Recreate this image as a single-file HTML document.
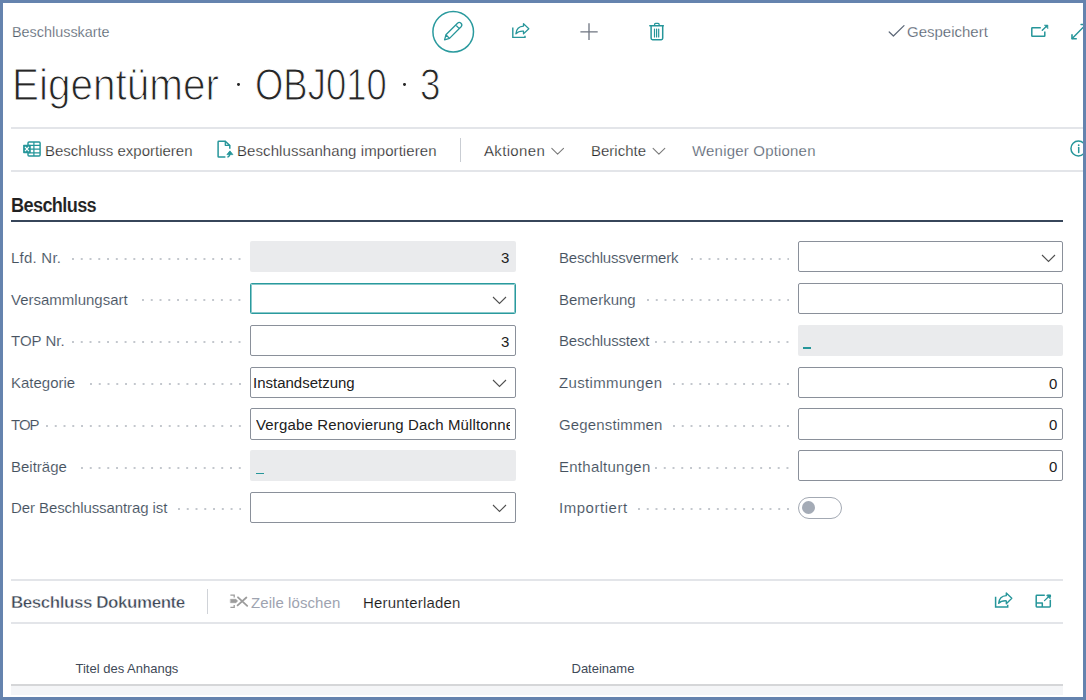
<!DOCTYPE html>
<html><head><meta charset="utf-8">
<style>
html,body{margin:0;padding:0;}
body{width:1086px;height:700px;position:relative;overflow:hidden;background:#fff;font-family:"Liberation Sans",sans-serif;}
.t{position:absolute;white-space:nowrap;line-height:1;-webkit-text-stroke:0.25px #fff;}
.ln{position:absolute;height:2px;background:#e3e5e9;}
.dots{position:absolute;height:2px;background-image:radial-gradient(circle at 1px 1px,#c3c7cd 0.85px,rgba(255,255,255,0) 1.25px);background-size:8.78px 2px;background-repeat:repeat-x;}
.box{position:absolute;box-sizing:border-box;border:1px solid #8a909a;background:#fff;border-radius:2px;}
.box.ro{border:none;background:#eaebed;}
.box.focus{border:1px solid #2a9a9e;box-shadow:inset 0 0 0 1px rgba(42,154,158,0.55);border-radius:1.5px;}
.chev{position:absolute;}
svg{position:absolute;overflow:visible;}
#frame{position:absolute;left:0;top:0;width:1080px;height:694px;border:3px solid #6583ae;z-index:10;}
</style></head>
<body>
<div class="t" style="left:12.00px;top:24.96px;font-size:14.4px;color:#4d5868;">Beschlusskarte</div>
<div class="t" style="left:11.71px;top:61.95px;font-size:45px;color:#262626;-webkit-text-stroke:1.1px #fff;transform:scaleX(0.899);transform-origin:0 0;">Eigentümer</div>
<div class="t" style="left:255.26px;top:61.95px;font-size:45px;color:#262626;-webkit-text-stroke:1.1px #fff;transform:scaleX(0.81);transform-origin:0 0;">OBJ010</div>
<div class="t" style="left:420.45px;top:61.95px;font-size:45px;color:#262626;-webkit-text-stroke:1.1px #fff;transform:scaleX(0.817);transform-origin:0 0;">3</div>
<div style="position:absolute;left:236.9px;top:83.1px;width:2.8px;height:2.8px;border-radius:50%;background:#262626"></div>
<div style="position:absolute;left:402.9px;top:83.1px;width:2.8px;height:2.8px;border-radius:50%;background:#262626"></div>
<div class="t" style="left:907.00px;top:24.11px;font-size:15.4px;color:#4d5868;transform:scaleX(0.974);transform-origin:0 0;">Gespeichert</div>
<div class="ln" style="left:11px;top:127px;width:1072px;"></div>
<div class="ln" style="left:11px;top:170px;width:1072px;"></div>
<div style="position:absolute;left:459.8px;top:137.7px;width:1px;height:24.5px;background:#c9cdd3"></div>
<div class="t" style="left:45.00px;top:143.11px;font-size:15.4px;color:#262626;transform:scaleX(0.974);transform-origin:0 0;">Beschluss exportieren</div>
<div class="t" style="left:237.30px;top:143.11px;font-size:15.4px;color:#262626;letter-spacing:0.08px;transform:scaleX(0.974);transform-origin:0 0;">Beschlussanhang importieren</div>
<div class="t" style="left:483.50px;top:143.11px;font-size:15.4px;color:#262626;letter-spacing:0.35px;transform:scaleX(0.974);transform-origin:0 0;">Aktionen</div>
<div class="t" style="left:590.50px;top:143.11px;font-size:15.4px;color:#262626;transform:scaleX(0.974);transform-origin:0 0;">Berichte</div>
<div class="t" style="left:691.50px;top:143.11px;font-size:15.4px;color:#4d5868;letter-spacing:0.2px;transform:scaleX(0.974);transform-origin:0 0;">Weniger Optionen</div>
<div class="t" style="left:11.00px;top:195.62px;font-size:19.5px;color:#212121;font-weight:700;letter-spacing:-0.7px;-webkit-text-stroke:0.1px #fff;transform:scaleX(0.932);transform-origin:0 0;">Beschluss</div>
<div style="position:absolute;left:11px;top:219.5px;width:1052px;height:2px;background:#37465a"></div>
<div class="t" style="left:11.00px;top:249.81px;font-size:15.4px;color:#46525f;letter-spacing:0.24px;-webkit-text-stroke:0.12px #fff;transform:scaleX(0.974);transform-origin:0 0;">Lfd. Nr.</div>
<div class="t" style="left:558.80px;top:249.81px;font-size:15.4px;color:#46525f;letter-spacing:-0.2px;-webkit-text-stroke:0.12px #fff;transform:scaleX(0.974);transform-origin:0 0;">Beschlussvermerk</div>
<div class="dots" style="left:72.20px;top:257.60px;width:168.82px"></div>
<div class="dots" style="left:690.60px;top:257.60px;width:98.58px"></div>
<div class="t" style="left:11.00px;top:291.61px;font-size:15.4px;color:#46525f;-webkit-text-stroke:0.12px #fff;transform:scaleX(0.974);transform-origin:0 0;">Versammlungsart</div>
<div class="t" style="left:558.80px;top:291.61px;font-size:15.4px;color:#46525f;-webkit-text-stroke:0.12px #fff;transform:scaleX(0.974);transform-origin:0 0;">Bemerkung</div>
<div class="dots" style="left:142.30px;top:299.40px;width:98.58px"></div>
<div class="dots" style="left:646.60px;top:299.40px;width:142.48px"></div>
<div class="t" style="left:11.00px;top:333.41px;font-size:15.4px;color:#46525f;-webkit-text-stroke:0.12px #fff;transform:scaleX(0.974);transform-origin:0 0;">TOP Nr.</div>
<div class="t" style="left:558.80px;top:333.41px;font-size:15.4px;color:#46525f;letter-spacing:-0.17px;-webkit-text-stroke:0.12px #fff;transform:scaleX(0.974);transform-origin:0 0;">Beschlusstext</div>
<div class="dots" style="left:72.20px;top:341.20px;width:168.82px"></div>
<div class="dots" style="left:655.30px;top:341.20px;width:133.70px"></div>
<div class="t" style="left:11.00px;top:375.21px;font-size:15.4px;color:#46525f;-webkit-text-stroke:0.12px #fff;transform:scaleX(0.974);transform-origin:0 0;">Kategorie</div>
<div class="t" style="left:558.80px;top:375.21px;font-size:15.4px;color:#46525f;letter-spacing:0.36px;-webkit-text-stroke:0.12px #fff;transform:scaleX(0.974);transform-origin:0 0;">Zustimmungen</div>
<div class="dots" style="left:89.80px;top:383.00px;width:151.26px"></div>
<div class="dots" style="left:672.90px;top:383.00px;width:116.14px"></div>
<div class="t" style="left:11.00px;top:416.91px;font-size:15.4px;color:#46525f;letter-spacing:-1.0px;-webkit-text-stroke:0.12px #fff;transform:scaleX(0.974);transform-origin:0 0;">TOP</div>
<div class="t" style="left:558.80px;top:416.91px;font-size:15.4px;color:#46525f;letter-spacing:0.16px;-webkit-text-stroke:0.12px #fff;transform:scaleX(0.974);transform-origin:0 0;">Gegenstimmen</div>
<div class="dots" style="left:45.90px;top:424.70px;width:195.16px"></div>
<div class="dots" style="left:672.90px;top:424.70px;width:116.14px"></div>
<div class="t" style="left:11.00px;top:458.71px;font-size:15.4px;color:#46525f;-webkit-text-stroke:0.12px #fff;transform:scaleX(0.974);transform-origin:0 0;">Beiträge</div>
<div class="t" style="left:558.80px;top:458.71px;font-size:15.4px;color:#46525f;letter-spacing:0.27px;-webkit-text-stroke:0.12px #fff;transform:scaleX(0.974);transform-origin:0 0;">Enthaltungen</div>
<div class="dots" style="left:81.00px;top:466.50px;width:160.04px"></div>
<div class="dots" style="left:655.30px;top:466.50px;width:133.70px"></div>
<div class="t" style="left:11.00px;top:500.41px;font-size:15.4px;color:#46525f;letter-spacing:-0.09px;-webkit-text-stroke:0.12px #fff;transform:scaleX(0.974);transform-origin:0 0;">Der Beschlussantrag ist</div>
<div class="t" style="left:558.80px;top:500.41px;font-size:15.4px;color:#46525f;letter-spacing:0.55px;-webkit-text-stroke:0.12px #fff;transform:scaleX(0.974);transform-origin:0 0;">Importiert</div>
<div class="dots" style="left:177.50px;top:508.20px;width:63.46px"></div>
<div class="dots" style="left:637.80px;top:508.20px;width:151.26px"></div>
<div class="box ro" style="left:250px;top:241.3px;width:265.5px;height:31.2px"></div>
<div class="t" style="left:501.00px;top:250.21px;font-size:15.4px;color:#212121;-webkit-text-stroke:0;transform:scaleX(0.974);transform-origin:0 0;">3</div>
<div class="box focus" style="left:250px;top:283.1px;width:265.5px;height:31.2px"></div>
<svg class="chev" style="left:492px;top:295.6px" width="15" height="9" viewBox="0 0 15 9"><path d="M1 1 L7.5 7.5 L14 1" fill="none" stroke="#505050" stroke-width="1.1"/></svg>
<div class="box " style="left:250px;top:324.9px;width:265.5px;height:31.2px"></div>
<div class="t" style="left:501.00px;top:333.81px;font-size:15.4px;color:#212121;-webkit-text-stroke:0;transform:scaleX(0.974);transform-origin:0 0;">3</div>
<div class="box " style="left:250px;top:366.7px;width:265.5px;height:31.2px"></div>
<div class="t" style="left:253.30px;top:375.31px;font-size:15.4px;color:#212121;-webkit-text-stroke:0;transform:scaleX(0.974);transform-origin:0 0;">Instandsetzung</div>
<svg class="chev" style="left:492px;top:379.2px" width="15" height="9" viewBox="0 0 15 9"><path d="M1 1 L7.5 7.5 L14 1" fill="none" stroke="#505050" stroke-width="1.1"/></svg>
<div class="box " style="left:250px;top:408.4px;width:265.5px;height:31.2px"></div>
<div style="position:absolute;left:255px;top:409.4px;width:254.5px;height:29.2px;overflow:hidden">
<div class="t" style="left:0.50px;top:7.91px;font-size:15.4px;color:#212121;letter-spacing:0.15px;-webkit-text-stroke:0;transform:scaleX(0.974);transform-origin:0 0;">Vergabe Renovierung Dach Mülltonne</div>
</div>
<div class="box ro" style="left:250px;top:450.2px;width:265.5px;height:31.2px"></div>
<div style="position:absolute;left:255.5px;top:472.7px;width:8px;height:1.3px;background:#26969a"></div>
<div class="box " style="left:250px;top:491.9px;width:265.5px;height:31.2px"></div>
<svg class="chev" style="left:492px;top:504.4px" width="15" height="9" viewBox="0 0 15 9"><path d="M1 1 L7.5 7.5 L14 1" fill="none" stroke="#505050" stroke-width="1.1"/></svg>
<div class="box " style="left:797.5px;top:241.3px;width:265.5px;height:31.2px"></div>
<svg class="chev" style="left:1041.0px;top:253.8px" width="15" height="9" viewBox="0 0 15 9"><path d="M1 1 L7.5 7.5 L14 1" fill="none" stroke="#505050" stroke-width="1.1"/></svg>
<div class="box " style="left:797.5px;top:283.1px;width:265.5px;height:31.2px"></div>
<div class="box ro" style="left:797.5px;top:324.9px;width:265.5px;height:31.2px"></div>
<div style="position:absolute;left:803.0px;top:347.4px;width:8px;height:1.3px;background:#26969a"></div>
<div class="box " style="left:797.5px;top:366.7px;width:265.5px;height:31.2px"></div>
<div class="t" style="left:1048.50px;top:375.61px;font-size:15.4px;color:#212121;-webkit-text-stroke:0;transform:scaleX(0.974);transform-origin:0 0;">0</div>
<div class="box " style="left:797.5px;top:408.4px;width:265.5px;height:31.2px"></div>
<div class="t" style="left:1048.50px;top:417.31px;font-size:15.4px;color:#212121;-webkit-text-stroke:0;transform:scaleX(0.974);transform-origin:0 0;">0</div>
<div class="box " style="left:797.5px;top:450.2px;width:265.5px;height:31.2px"></div>
<div class="t" style="left:1048.50px;top:459.11px;font-size:15.4px;color:#212121;-webkit-text-stroke:0;transform:scaleX(0.974);transform-origin:0 0;">0</div>
<div style="position:absolute;left:797.5px;top:497.3px;width:44px;height:21.5px;box-sizing:border-box;border:1px solid #a3a9b3;border-radius:11px;background:#fff"></div>
<div style="position:absolute;left:801.8px;top:501.3px;width:13px;height:13px;border-radius:50%;background:#a4abb6"></div>
<div class="ln" style="left:11px;top:579px;width:1052px;"></div>
<div class="ln" style="left:11px;top:622px;width:1052px;"></div>
<div class="t" style="left:11.00px;top:593.55px;font-size:17px;color:#3d4756;font-weight:700;letter-spacing:-0.45px;-webkit-text-stroke:0.45px #fff;">Beschluss Dokumente</div>
<div style="position:absolute;left:207px;top:589px;width:1px;height:25px;background:#d0d3d8"></div>
<div class="t" style="left:251.20px;top:594.61px;font-size:15.4px;color:#9ea3b0;letter-spacing:0.08px;-webkit-text-stroke:0;transform:scaleX(0.974);transform-origin:0 0;">Zeile löschen</div>
<div class="t" style="left:363.30px;top:594.61px;font-size:15.4px;color:#1e1e1e;letter-spacing:0.2px;-webkit-text-stroke:0.1px #fff;transform:scaleX(0.974);transform-origin:0 0;">Herunterladen</div>
<div class="t" style="left:75.50px;top:661.55px;font-size:13px;color:#3f4a58;-webkit-text-stroke:0;">Titel des Anhangs</div>
<div class="t" style="left:571.50px;top:661.55px;font-size:13px;color:#3f4a58;-webkit-text-stroke:0;">Dateiname</div>
<div style="position:absolute;left:11px;top:684px;width:1052px;height:2px;background:#d5d6d8"></div>
<div style="position:absolute;left:11px;top:686px;width:1052px;height:9px;background:#f4f5f7"></div>
<svg style="left:0;top:0" width="1086" height="700" viewBox="0 0 1086 700">
<g fill="none" stroke="#26969a" stroke-linejoin="round" stroke-linecap="round">
  <!-- edit circle + pencil -->
  <circle cx="453.2" cy="31.8" r="20.3" stroke="#2a9a9e" stroke-width="1.5"/>
  <path d="M444.6 39.8 L445.9 34.8 L457.5 23.2 A2.55 2.55 0 0 1 461.1 26.8 L449.5 38.4 Z M445.9 34.8 L449.5 38.4 M455.7 25 L459.3 28.6" stroke-width="1.3"/>
  <!-- share top -->
  <path d="M512.8 27.6 V37.4 H525 V35.8" stroke-width="1.4" stroke-linecap="butt" stroke-linejoin="miter"/>
  <path d="M515.9 33.8 C516.3 29.3 519.3 26.3 523.5 26.1 V23.6 L528.8 28.8 L523.5 33.9 V31.2 C520.3 31 517.6 32 515.9 33.8 Z" stroke-width="1.3"/>
  <!-- trash -->
  <path d="M649.8 25.7 H663.3" stroke-width="1.45"/>
  <path d="M654.6 25.4 V24.2 Q654.6 23.3 655.5 23.3 H658.2 Q659.1 23.3 659.1 24.2 V25.4" stroke-width="1.3"/>
  <path d="M651.1 25.7 V38.3 Q651.1 39.7 652.5 39.7 H661.3 Q662.7 39.7 662.7 38.3 V25.7" stroke-width="1.5"/>
  <path d="M654.5 29 V37 M656.6 29 V37 M658.7 29 V37" stroke-width="1.2"/>
  <!-- open in new window -->
  <path d="M1040.8 27.8 H1032.3 Q1031.8 27.8 1031.8 28.3 V35.8 Q1031.8 36.3 1032.3 36.3 H1044.3 Q1044.8 36.3 1044.8 35.8 V31.6" stroke-width="1.5" stroke-linecap="butt"/>
  <path d="M1042.3 30.3 L1046.5 26.3" stroke-width="1.4"/>
  <path d="M1044.6 25.1 H1047.9 V28.4 Z" fill="#26969a" stroke-width="0.6"/>
  <!-- expand (clipped) -->
  <path d="M1072.2 38.6 L1083 27.6" stroke-width="1.4"/>
  <path d="M1072 34.2 V38.8 H1076.8" stroke-width="1.6" stroke-linecap="butt"/>
  <path d="M1081 24.5 H1083.5" stroke-width="1.4"/>
  <!-- info -->
  <circle cx="1078.4" cy="148.5" r="7.45" stroke-width="1.5"/>
  <path d="M1078.7 147.6 V152.4" stroke-width="1.5"/>
  <circle cx="1078.7" cy="145.2" r="0.9" fill="#26969a" stroke="none"/>
  <!-- document import -->
  <path d="M225.4 157.1 H218.8 Q218.1 157.1 218.1 156.4 V141.9 Q218.1 141.2 218.8 141.2 H225.3 L229.8 145.6 V148.7" stroke-width="1.5" stroke-linecap="butt"/>
  <path d="M225.3 141.4 V145.3 H229.6" stroke-width="1.3"/>
  <path d="M227.4 157.1 Q229.9 156.6 229.9 153.6" stroke-width="1.4" stroke-linecap="butt"/>
  <path d="M227.2 154.3 L229.9 150.9 L232.6 154.3 Z" fill="#26969a" stroke-width="0.9"/>
  <!-- share bottom -->
  <path d="M995.6 596.8 V607 H1007.7 V604.8" stroke-width="1.5" stroke-linecap="butt" stroke-linejoin="miter"/>
  <path d="M998.7 603.4 C999.1 598.8 1002.2 595.9 1006.3 595.7 V593 L1011.8 598.3 L1006.3 603.7 V600.8 C1003 600.6 1000.4 601.5 998.7 603.4 Z" stroke-width="1.35"/>
  <!-- expand bottom -->
  <path d="M1044.8 595.2 H1036.9 Q1036.2 595.2 1036.2 595.9 V606.3 Q1036.2 607 1036.9 607 H1049.6 Q1050.3 607 1050.3 606.3 V600" stroke-width="1.5" stroke-linecap="butt"/>
  <path d="M1036.2 603 H1042.3 V607" stroke-width="1.5" stroke-linecap="butt"/>
  <path d="M1047.2 595.2 H1050.3 V596.9" stroke-width="1.5" stroke-linecap="butt"/>
  <path d="M1044.5 600.6 L1048.8 596.5" stroke-width="1.3"/>
  <path d="M1046.6 595.3 H1050.3 V599 Z" fill="#26969a" stroke-width="0.5"/>
</g>
<g fill="none" stroke-linecap="round" stroke-linejoin="round">
  <!-- plus -->
  <path d="M580.4 31.8 H597.7 M589 23.2 V40" stroke="#6e7480" stroke-width="1.3" stroke-linecap="butt"/>
  <!-- check -->
  <path d="M889.2 32 L893.4 36 L904 25.6" stroke="#5d6878" stroke-width="1.25"/>
  <!-- toolbar chevrons -->
  <path d="M551.8 148.4 L557.6 154.1 L563.5 148.3" stroke="#7a7a7a" stroke-width="1.1"/>
  <path d="M653.1 148.4 L658.9 154.1 L664.8 148.3" stroke="#7a7a7a" stroke-width="1.1"/>
  <!-- zeile loeschen icon -->
  <path d="M230.4 595.1 H234.2 V597.4 M234.2 605.1 V607.4 H230.4" stroke="#9c9c9c" stroke-width="1.3" stroke-linecap="butt" stroke-linejoin="miter"/>
  <path d="M230.7 599.3 H236 L237.6 600.9 L236 602.7 H230.7 Z" fill="#9c9c9c" stroke="#9c9c9c" stroke-width="0.6"/>
  <path d="M238 597.3 L247.2 605.9 M237.6 605.3 L246.4 597.5" stroke="#9c9c9c" stroke-width="1.8"/>
</g>
<!-- excel icon -->
<g>
  <rect x="28" y="142" width="12.1" height="14" rx="1" fill="none" stroke="#26969a" stroke-width="1.45"/>
  <path d="M28 145.4 H40 M28 149.1 H40 M28 152.9 H40 M33.9 142 V156" stroke="#26969a" stroke-width="1.25" fill="none"/>
  <rect x="23.1" y="144.7" width="7.7" height="8.6" rx="0.7" fill="#26969a"/>
  <path d="M25 146.8 L28.9 151.2 M28.9 146.8 L25 151.2" stroke="#fff" stroke-width="1.2"/>
</g>
</svg>

<div id="frame"></div>
</body></html>
